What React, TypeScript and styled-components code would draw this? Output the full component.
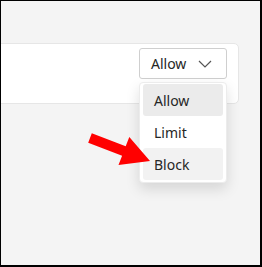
import React from "react";
import styled, { createGlobalStyle } from "styled-components";

const Global = createGlobalStyle`
  html, body { margin: 0; padding: 0; background: #f3f3f3; }
  body { font-family: "Noto Sans", "Open Sans", sans-serif; }
`;

const Frame = styled.div`
  position: relative;
  box-sizing: border-box;
  width: 262px;
  height: 267px;
  overflow: hidden;
  background: #f4f4f4;
  border-top: 1px solid #000;
  border-left: 1px solid #000;
  border-right: 2px solid #000;
  border-bottom: 2px solid #000;
`;

const Card = styled.div`
  box-sizing: border-box;
  margin: 42px 21px 0 -10px;
  height: 61px;
  background: #fff;
  border: 1px solid #e6e6e6;
  border-radius: 5px;
  display: flex;
  justify-content: flex-end;
  align-items: flex-start;
  padding: 4px 11px 0 0;
`;

const SelectWrap = styled.div`
  position: relative;
  width: 88px;
`;

const Button = styled.div`
  box-sizing: border-box;
  height: 31px;
  width: 88px;
  border: 1px solid #cfcfcf;
  border-radius: 3px;
  background: #fff;
  display: flex;
  align-items: center;
  justify-content: space-between;
  padding: 0 14px 0 11px;
  font-size: 14px;
  color: #262626;
`;

const Menu = styled.div`
  position: absolute;
  top: 34px;
  left: 0;
  box-sizing: border-box;
  width: 88px;
  padding: 1px 3px 2px;
  background: #fff;
  border: 1px solid #ececec;
  border-radius: 4px;
  box-shadow: 0 6px 14px rgba(0, 0, 0, 0.13);
  display: flex;
  flex-direction: column;
`;

const Item = styled.div<{ $tone?: "selected" | "hover" }>`
  height: 32px;
  display: flex;
  align-items: center;
  padding-left: 11px;
  border-radius: 3px;
  font-size: 14px;
  color: #262626;
  background: ${(p) =>
    p.$tone === "selected" ? "#ebebeb" : p.$tone === "hover" ? "#f2f2f2" : "transparent"};
`;

const Overlay = styled.svg`
  position: absolute;
  left: -1px;
  top: -1px;
  width: 262px;
  height: 267px;
  pointer-events: none;
`;

export default function App() {
  return (
    <>
      <Global />
      <Frame>
        <Card>
          <SelectWrap>
            <Button>
              <span>Allow</span>
              <svg width="14" height="8" viewBox="0 0 14 8">
                <path d="M1 1 L7 7 L13 1" fill="none" stroke="#555" strokeWidth="1.2" />
              </svg>
            </Button>
            <Menu>
              <Item $tone="selected">Allow</Item>
              <Item>Limit</Item>
              <Item $tone="hover">Block</Item>
            </Menu>
          </SelectWrap>
        </Card>
        <Overlay viewBox="0 0 262 267">
          <polygon
            points="91.8,133.3 125.7,146.3 129.3,137 150,161 118.5,165 122.1,155.7 88.2,142.7"
            fill="#f00"
          />
        </Overlay>
      </Frame>
    </>
  );
}
